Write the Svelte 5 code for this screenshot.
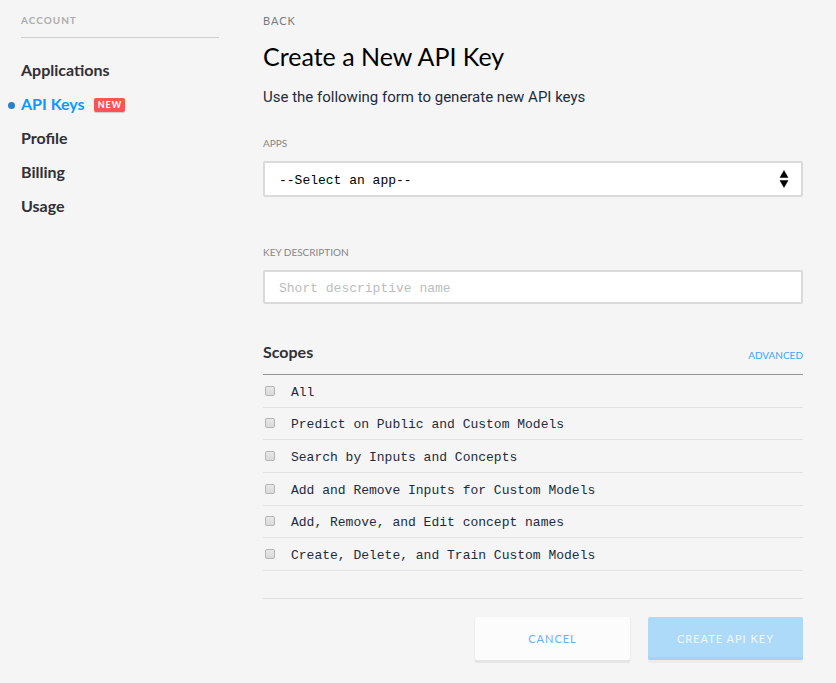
<script>
  const links = [
    { label: 'Applications' },
    { label: 'API Keys', active: true, badge: 'NEW' },
    { label: 'Profile' },
    { label: 'Billing' },
    { label: 'Usage' }
  ];

  const scopes = [
    'All',
    'Predict on Public and Custom Models',
    'Search by Inputs and Concepts',
    'Add and Remove Inputs for Custom Models',
    'Add, Remove, and Edit concept names',
    'Create, Delete, and Train Custom Models'
  ];
</script>

<div class="page">
  <aside>
    <h2 class="account">ACCOUNT</h2>
    <nav aria-label="Account">
      {#each links as link}
        <a href="#top" class:active={link.active}>
          {link.label}
          {#if link.badge}<span class="badge">{link.badge}</span>{/if}
        </a>
      {/each}
    </nav>
  </aside>

  <main>
    <a class="back" href="#back">BACK</a>
    <h1>Create a New API Key</h1>
    <p class="intro">Use the following form to generate new API keys</p>

    <form onsubmit={(e) => e.preventDefault()}>
      <label class="field-label" for="app">APPS</label>
      <div class="select">
        <select id="app">
          <option>--Select an app--</option>
        </select>
        <svg width="10" height="18" viewBox="0 0 10 18" aria-hidden="true">
          <path d="M5 0.5L9 7.5H1ZM1 10.5H9L5 17.5Z" fill="#000" stroke="#000" stroke-width="0.5" />
        </svg>
      </div>

      <label class="field-label" for="description">KEY DESCRIPTION</label>
      <input id="description" class="text" type="text" placeholder="Short descriptive name" />

      <div class="scopes-head">
        <h2>Scopes</h2>
        <a href="#advanced">ADVANCED</a>
      </div>
      <ul>
        {#each scopes as scope}
          <li>
            <label><input type="checkbox" /><span>{scope}</span></label>
          </li>
        {/each}
      </ul>

      <div class="actions">
        <button type="button" class="cancel">CANCEL</button>
        <button type="submit" class="create">CREATE API KEY</button>
      </div>
    </form>
  </main>
</div>

<style>
  :global(body) {
    background: #f5f5f5;
  }
  .page {
    --sans: Lato, 'Open Sans', sans-serif;
    --mono: 'Liberation Mono', monospace;
    display: grid;
    grid-template-columns: 198px minmax(0, 1fr);
    column-gap: 44px;
    padding: 12px 33px 21px 21px;
    font-family: var(--sans);
    color: #303035;
  }
  .page * {
    box-sizing: border-box;
  }
  a {
    text-decoration: none;
  }
  h1,
  h2,
  p,
  ul {
    margin: 0;
    padding: 0;
    font-weight: normal;
  }
  .account {
    padding-bottom: 9px;
    border-bottom: 1px solid #cdcdcd;
    font-size: 10px;
    line-height: 16px;
    font-weight: 700;
    letter-spacing: 1px;
    color: #acacac;
  }
  nav {
    display: flex;
    flex-direction: column;
    padding-top: 15px;
  }
  nav a {
    position: relative;
    display: flex;
    align-items: center;
    gap: 9px;
    font-size: 16px;
    line-height: 34px;
    font-weight: 700;
    color: #303035;
  }
  nav a.active {
    color: #0d98fb;
  }
  nav a.active::before {
    content: '';
    position: absolute;
    left: -13px;
    top: 15px;
    width: 7px;
    height: 7px;
    border-radius: 50%;
    background: #2980cc;
  }
  .badge {
    margin-top: 2px;
    padding: 0 3px 0 4px;
    border-radius: 2px;
    background: #fa5555;
    box-shadow: 0 1px 1px #ccc;
    font-size: 9px;
    line-height: 14px;
    letter-spacing: 1px;
    color: #fff;
  }
  .back {
    display: block;
    font-size: 11px;
    line-height: 18px;
    letter-spacing: 1px;
    color: #737a82;
  }
  h1 {
    margin-top: 8px;
    font-size: 25px;
    line-height: 36px;
    color: #000;
  }
  .intro {
    margin-top: 12px;
    font-family: Roboto, sans-serif;
    font-size: 15px;
    line-height: 22px;
    color: #1d2b3e;
  }
  form {
    padding-top: 28px;
  }
  .field-label {
    display: block;
    margin-bottom: 10px;
    font-size: 10px;
    line-height: 15px;
    color: #858585;
  }
  .select {
    position: relative;
    margin-bottom: 48px;
  }
  .select svg {
    position: absolute;
    right: 14px;
    top: 9px;
    pointer-events: none;
  }
  select,
  .text {
    appearance: none;
    display: block;
    width: 100%;
    height: 36px;
    margin: 0;
    padding: 2px 14px 0;
    border: 2px solid #dadada;
    border-radius: 2px;
    background: #fff;
    font-family: var(--mono);
    font-size: 13px;
    color: #000;
  }
  .text {
    height: 34px;
  }
  .text::placeholder {
    color: #b9bdc1;
  }
  .scopes-head {
    display: flex;
    justify-content: space-between;
    align-items: flex-end;
    margin-top: 35px;
    padding-bottom: 9px;
    border-bottom: 1px solid #949494;
  }
  .scopes-head h2 {
    font-size: 16px;
    line-height: 26px;
    font-weight: 700;
  }
  .scopes-head a {
    font-size: 10px;
    line-height: 20px;
    color: #3ea5f0;
  }
  ul {
    display: grid;
    grid-auto-rows: 1fr;
    height: 196px;
    list-style: none;
  }
  li {
    display: grid;
    border-bottom: 1px solid #e3e3e3;
  }
  li label {
    display: flex;
    align-items: center;
    gap: 16px;
    padding-left: 2px;
    font-family: var(--mono);
    font-size: 13px;
    line-height: 20px;
    color: #1d2b3e;
  }
  li span {
    padding-top: 4px;
  }
  li input {
    appearance: none;
    width: 10px;
    height: 10px;
    margin: 0;
    border: 1px solid #b5b5b5;
    border-radius: 2px;
    background: linear-gradient(#e8e8e8, #d9d9d9);
  }
  .actions {
    display: flex;
    justify-content: flex-end;
    gap: 18px;
    margin-top: 27px;
    padding-top: 18px;
    border-top: 1px solid #dedede;
  }
  button {
    width: 155px;
    height: 43px;
    padding: 0;
    border: 0;
    border-radius: 2px;
    font-family: var(--sans);
    font-size: 11px;
    letter-spacing: 1px;
  }
  .cancel {
    background: #fcfcfc;
    box-shadow: 0 3px 0 #e5e5e5, 0 1px 2px #ddd;
    color: #58b5f6;
  }
  .create {
    background: #addaf9;
    box-shadow: inset 0 -3px 0 #a9d0f6, 0 3px 0 #ededed;
    color: #f0f7fc;
  }
</style>
